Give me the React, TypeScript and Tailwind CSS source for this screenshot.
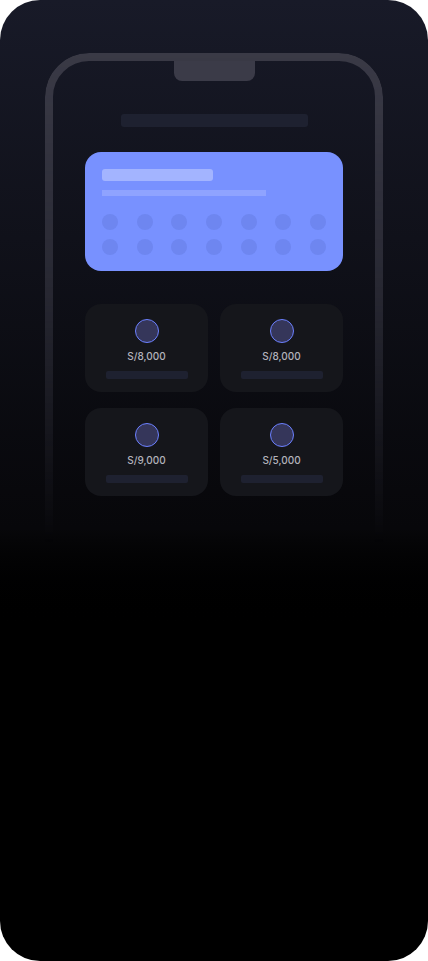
const amounts = ["S/8,000", "S/8,000", "S/9,000", "S/5,000"];

const Dots = () => (
  <div className="flex justify-between">
    {Array.from({ length: 7 }).map((_, i) => (
      <div key={i} className="w-4 h-4 rounded-full bg-[#6e86f0]" />
    ))}
  </div>
);

export default function App() {
  return (
    <div className="w-[428px] h-[961px] bg-white">
      <div className="w-[428px] h-[961px] rounded-[40px] overflow-hidden bg-linear-to-b from-[#181a28] via-[#07070a] via-[55%] to-black to-[66%] font-['Inter','Liberation_Sans',sans-serif]">
        <div className="relative mx-[45px] mt-[53px] h-[940px] px-10 pt-2 before:content-[''] before:absolute before:inset-0 before:border-8 before:border-[#3a3a46] before:rounded-t-[44px] before:[mask-image:linear-gradient(to_bottom,black_0px,rgba(0,0,0,0.55)_250px,transparent_490px)] before:pointer-events-none">
          {/* Notch */}
          <div className="mx-auto w-[81px] h-5 rounded-b-lg bg-[#3b3b48]" />

          {/* Top placeholder */}
          <div className="mx-auto mt-[33px] w-[187px] h-[13px] rounded-[3px] bg-[#1e2130]" />

          {/* Blue card */}
          <div className="mt-[25px] h-[119px] rounded-2xl bg-[#7891ff] px-[17px] pt-[17px]">
            <div className="w-[111px] h-3 rounded-[3px] bg-[#a3b4ff]" />
            <div className="mt-[9px] w-[164px] h-[6px] bg-[#8fa3ff]" />
            <div className="mt-[18px] flex flex-col gap-[9px]">
              <Dots />
              <Dots />
            </div>
          </div>

          {/* Amount cards */}
          <div className="mt-[33px] grid grid-cols-2 gap-x-3 gap-y-4">
            {amounts.map((a, i) => (
              <div key={i} className="h-[88px] rounded-2xl bg-[#15161b] flex flex-col items-center pt-[15px]">
                <div className="w-6 h-6 rounded-full border-[1.5px] border-[#6b80ff] bg-[#35365a]" />
                <p className="mt-[6px] text-[10px] leading-[14px] font-medium text-[#b3b3bc]">{a}</p>
                <div className="mt-2 w-[82px] h-2 rounded-[2px] bg-[#1e2130]" />
              </div>
            ))}
          </div>
        </div>
      </div>
    </div>
  );
}
